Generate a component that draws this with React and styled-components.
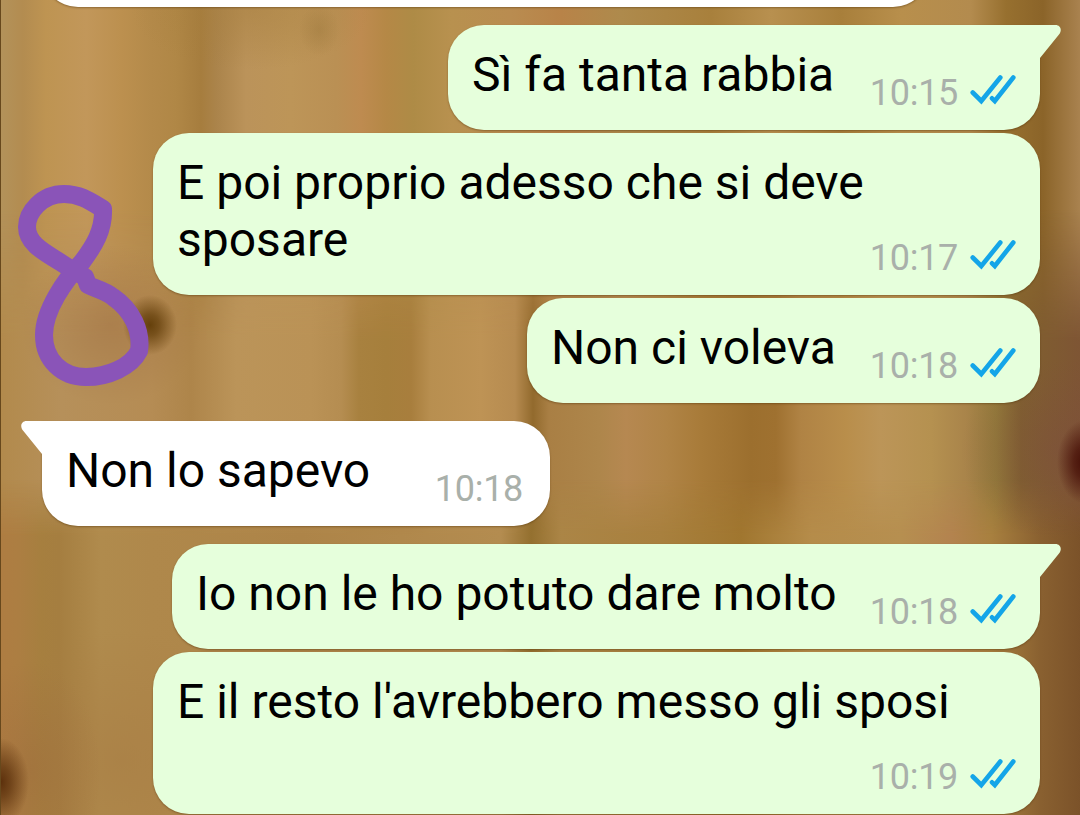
import React from 'react';
import styled, { createGlobalStyle, css } from 'styled-components';

const messages = [
  { id: 1, text: 'Sì fa tanta rabbia', time: '10:15', mine: true, tail: true, width: 592 },
  { id: 2, text: 'E poi proprio adesso che si deve sposare', time: '10:17', mine: true, width: 887, tall: true },
  { id: 3, text: 'Non ci voleva', time: '10:18', mine: true, width: 513 },
  { id: 4, text: 'Non lo sapevo', time: '10:18', tail: true, width: 508 },
  { id: 5, text: 'Io non le ho potuto dare molto', time: '10:18', mine: true, tail: true, width: 868 },
  { id: 6, text: "E il resto l'avrebbero messo gli sposi", time: '10:19', mine: true, width: 887, tall: true },
];

const Ticks = () => (
  <TicksIcon viewBox="0 0 46 32">
    <path d="M2.7 18.5 L11.3 27 L30.3 3.5 M22 24.3 L24.8 27 L43.3 3.5" />
  </TicksIcon>
);

const Tail = ({ mine }) => (
  <TailShape $mine={mine} viewBox="0 0 24 36">
    <path d="M0 0 H18.5 C23.5 0 25.5 5 22 9.5 L3 33 V36 H0 Z" />
  </TailShape>
);

const Message = ({ message }) => (
  <Bubble $mine={message.mine} $tail={message.tail} $width={message.width} $tall={message.tall}>
    {message.tail && <Tail mine={message.mine} />}
    <Text>{message.text}</Text>
    <Meta $mine={message.mine}>
      <Time>{message.time}</Time>
      {message.mine && <Ticks />}
    </Meta>
  </Bubble>
);

const App = () => (
  <Screen>
    <GlobalStyle />
    <Wallpaper>
      <TopGrain />
      <MiddleGrain />
      <BottomGrain />
      <Knots />
    </Wallpaper>
    <Chat>
      <PreviousBubble />
      {messages.map((message) => (
        <Message key={message.id} message={message} />
      ))}
    </Chat>
    <Doodle viewBox="0 0 180 230">
      <path d="M85 107 C77 103 70 99 60 92 C46 83 27 74 27 57 C27 42 42 24 64 24 C80 24 90 31 103 39 C104 60 94 76 82 92 C65 110 44 140 44 165 C44 190 62 207 86 207 C108 207 131 197 139 181 C142 161 132 140 113 127 C104 120 96 119 88 115 L85 107" />
    </Doodle>
  </Screen>
);

export default App;

// Styles

const GlobalStyle = createGlobalStyle`
  body {
    margin: 0;
    overflow: hidden;
    font-family: Roboto, sans-serif;
  }
`;

const Screen = styled.div`
  display: grid;
  grid-template: 815px / 1080px;
  width: 1080px;
  height: 815px;
  overflow: hidden;

  & > * {
    grid-area: 1 / 1;
    z-index: 0;
  }
`;

const Wallpaper = styled.div`
  display: grid;
  background: #ae854a;
  border-left: 1px solid #67481c;

  & > * {
    grid-area: 1 / 1;
    z-index: 0;
  }
`;

const TopGrain = styled.div`
  background: linear-gradient(90deg,
    #b3925a 0, #b38c50 22px, #be9452 45px, #c2975a 85px, #bc904f 120px,
    #b48a4a 150px, #b08746 175px, #a67d3e 200px, #ab844b 216px, #bb935a 245px,
    #bd9558 290px, #ba9054 335px, #be8b50 360px, #b58846 385px, #ae8b46 412px,
    #b8914f 450px, #b98c50 510px, #b88348 560px, #ae8a4c 620px, #a8803c 710px,
    #b8904f 770px, #a87f3b 840px, #b88f4c 900px, #b38b4e 970px, #97702f 1005px,
    #8b6429 1042px, #aa8350 1080px);
`;

const MiddleGrain = styled.div`
  background: linear-gradient(90deg,
    #b28a4c 0, #b6905a 60px, #b58c54 150px, #ae854a 190px, #bb9459 235px,
    #ba9256 310px, #b58d51 340px, #a8813f 358px, #a67f3c 385px, #a87e3d 410px,
    #b88f50 430px, #be9355 480px, #b68b50 514px, #926a2d 532px, #a97f44 548px,
    #ae864b 598px, #b68851 625px, #b08446 665px, #a87b39 700px, #9c6f2e 750px,
    #9f7130 775px, #b08344 800px, #b98e4b 845px, #bc9558 880px, #b59150 930px,
    #a9844a 965px, #937a3a 995px, #80602f 1020px, #7e5534 1080px);
  mask-image: linear-gradient(transparent 210px, #000 340px);
`;

const BottomGrain = styled.div`
  background: linear-gradient(90deg,
    #ae7d42 0, #ac7e42 18px, #a67f3f 40px, #a57e40 58px, #b08b4d 100px,
    #af884b 150px, #ad8448 300px, #b38c50 500px, #94702f 530px, #ab8546 560px,
    #a8803e 660px, #a0762f 740px, #b58c4a 810px, #b68f50 900px, #b3834f 950px,
    #a8803f 990px, #896030 1040px, #7b5229 1080px);
  mask-image: linear-gradient(transparent 480px, #000 535px);
`;

const Knots = styled.div`
  background:
    radial-gradient(ellipse 27px 30px at 149px 325px, #65400b, rgba(101, 64, 11, 0.75) 35%, transparent),
    radial-gradient(ellipse 28px 42px at 1084px 462px, #430d05, rgba(75, 20, 10, 0.8) 40%, transparent),
    radial-gradient(ellipse 28px 44px at 0 782px, #5c300c, rgba(95, 52, 14, 0.75) 35%, transparent),
    radial-gradient(ellipse 90px 80px at 110px 325px, rgba(150, 100, 60, 0.35), transparent),
    radial-gradient(ellipse 100px 90px at 1060px 450px, rgba(125, 75, 65, 0.4), transparent),
    radial-gradient(ellipse 70px 110px at 30px 770px, rgba(150, 95, 55, 0.3), transparent),
    radial-gradient(ellipse 140px 130px at 120px 760px, rgba(168, 125, 68, 0.6), transparent),
    radial-gradient(ellipse 20px 26px at 318px 30px, rgba(150, 115, 55, 0.35), transparent),
    radial-gradient(ellipse 120px 60px at 250px 10px, rgba(165, 125, 60, 0.45), transparent);
`;

const Chat = styled.div`
  display: flex;
  flex-direction: column;
  box-sizing: border-box;
  padding: 0 40px 0 42px;
`;

const PreviousBubble = styled.div`
  flex: none;
  width: 887px;
  height: 80px;
  margin-top: -73px;
  background: #fff;
  border-radius: 36px;
  box-shadow: 0 1px 2px rgba(70, 40, 0, 0.4);
`;

const Bubble = styled.div`
  position: relative;
  display: flex;
  flex: none;
  align-self: ${(props) => props.$mine ? 'flex-end' : 'flex-start'};
  box-sizing: border-box;
  width: ${(props) => props.$width}px;
  height: ${(props) => props.$tall ? 162 : 105}px;
  margin-top: ${(props) => props.$tail ? 18 : 3}px;
  padding: 21px 24px 0 24px;
  background: ${(props) => props.$mine ? '#e6ffdc' : '#fff'};
  border-radius: 36px;
  box-shadow: 0 1px 2px rgba(70, 40, 0, 0.4);
  ${(props) => props.$tail && css`
    border-top-${props.$mine ? 'right' : 'left'}-radius: 0;
  `}
`;

const TailShape = styled.svg`
  position: absolute;
  top: 0;
  width: 24px;
  height: 36px;
  fill: ${(props) => props.$mine ? '#e6ffdc' : '#fff'};
  ${(props) => props.$mine ? css`right: -21px;` : css`
    left: -21px;
    transform: scaleX(-1);
  `}
`;

// the text may run above the time, which sits on the last line
const Text = styled.div`
  flex: 1;
  margin-right: -146px;
  color: #000;
  font-size: 48px;
  line-height: 57px;
`;

const Meta = styled.div`
  display: flex;
  flex: none;
  align-items: center;
  align-self: flex-end;
  gap: 12px;
  height: 42px;
  margin-bottom: 16px;
  margin-right: ${(props) => props.$mine ? 0 : 3}px;
`;

const Time = styled.span`
  color: #a9b0aa;
  font-size: 36px;
  line-height: 42px;
  letter-spacing: -0.3px;
`;

const TicksIcon = styled.svg`
  width: 46px;
  height: 32px;
  margin-top: -6px;
  fill: none;
  stroke: #14a5e8;
  stroke-width: 4.6;
  stroke-linecap: round;
`;

const Doodle = styled.svg`
  width: 180px;
  height: 230px;
  margin-top: 170px;
  fill: none;
  stroke: #8a54b8;
  stroke-width: 18;
  stroke-linecap: round;
  stroke-linejoin: round;
  pointer-events: none;
`;
